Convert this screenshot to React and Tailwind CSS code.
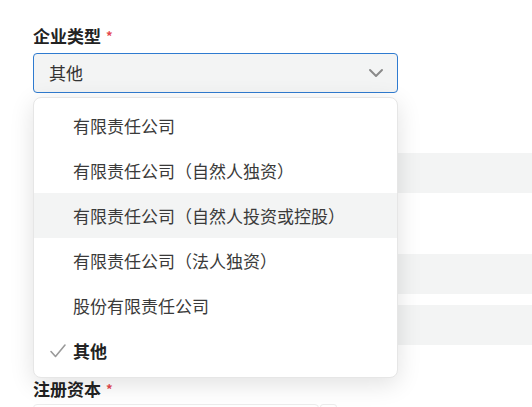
import React from "react";

const options = [
  "有限责任公司",
  "有限责任公司（自然人独资）",
  "有限责任公司（自然人投资或控股）",
  "有限责任公司（法人独资）",
  "股份有限责任公司",
  "其他",
];

function Label({ text }) {
  return (
    <div className="h-[20px] leading-[20px] text-[17px] font-bold text-[#222]">
      {text}
      <span className="ml-[5px] text-[13px] text-[#e5484d] align-top">*</span>
    </div>
  );
}

function App() {
  const selected = "其他";
  const hovered = 2;

  return (
    <div
      className="relative w-[532px] h-[407px] overflow-hidden bg-white"
      style={{ fontFamily: '"Noto Sans CJK SC", "Noto Sans", sans-serif' }}
    >
      <div className="pl-[33px] pt-[26px] w-[640px]">
        <Label text="企业类型" />
        <div className="mt-[7px] w-[365px] h-[40px] flex items-center justify-between px-[15px] bg-[#f3f4f4] border border-[#2f7bd0] rounded-[4px] text-[17px] text-[#333]">
          <span>{selected}</span>
          <svg width="16" height="10" viewBox="0 0 16 10" fill="none" className="mr-[-2px]">
            <path d="M2 2l6 6 6-6" stroke="#8a8a8a" strokeWidth="2" strokeLinecap="round" strokeLinejoin="round" />
          </svg>
        </div>

        {/* fields under the open menu */}
        <div className="mt-[60px] h-[40px] bg-[#f3f4f4] rounded-[4px]" />
        <div className="mt-[61px] h-[40px] bg-[#f3f4f4] rounded-[4px]" />
        <div className="mt-[11px] h-[40px] bg-[#f3f4f4] rounded-[4px]" />

        <div className="mt-[34px]">
          <Label text="注册资本" />
        </div>
        <div className="mt-[5px] flex items-start">
          <div className="w-[286px] h-[40px] border border-[#ececec] rounded-[4px] bg-white" />
          <div className="ml-[1px] w-[17px] h-[40px] border border-[#ececec] rounded-[3px] bg-white" />
        </div>
      </div>

      <div className="absolute left-[33px] top-[97px] w-[365px] pt-[5px] pb-[4px] bg-white border border-[#e6e6e6] rounded-[8px] shadow-[0_6px_24px_rgba(0,0,0,0.12)]">
        {options.map((opt, i) => (
          <div
            key={opt}
            className={
              "h-[45px] flex items-center text-[17px] " +
              (i === hovered ? "bg-[#f3f4f4] " : "") +
              (opt === selected ? "font-bold text-[#222]" : "text-[#3a3a3a]")
            }
          >
            <div className="w-[39px] flex justify-end pr-[6px]">
              {opt === selected && (
                <svg width="18" height="16" viewBox="0 0 18 16" fill="none">
                  <path d="M2 8.5l4.5 5L16 2" stroke="#9a9a9a" strokeWidth="1.6" strokeLinecap="round" strokeLinejoin="round" />
                </svg>
              )}
            </div>
            <span>{opt}</span>
          </div>
        ))}
      </div>
    </div>
  );
}

export default App;
